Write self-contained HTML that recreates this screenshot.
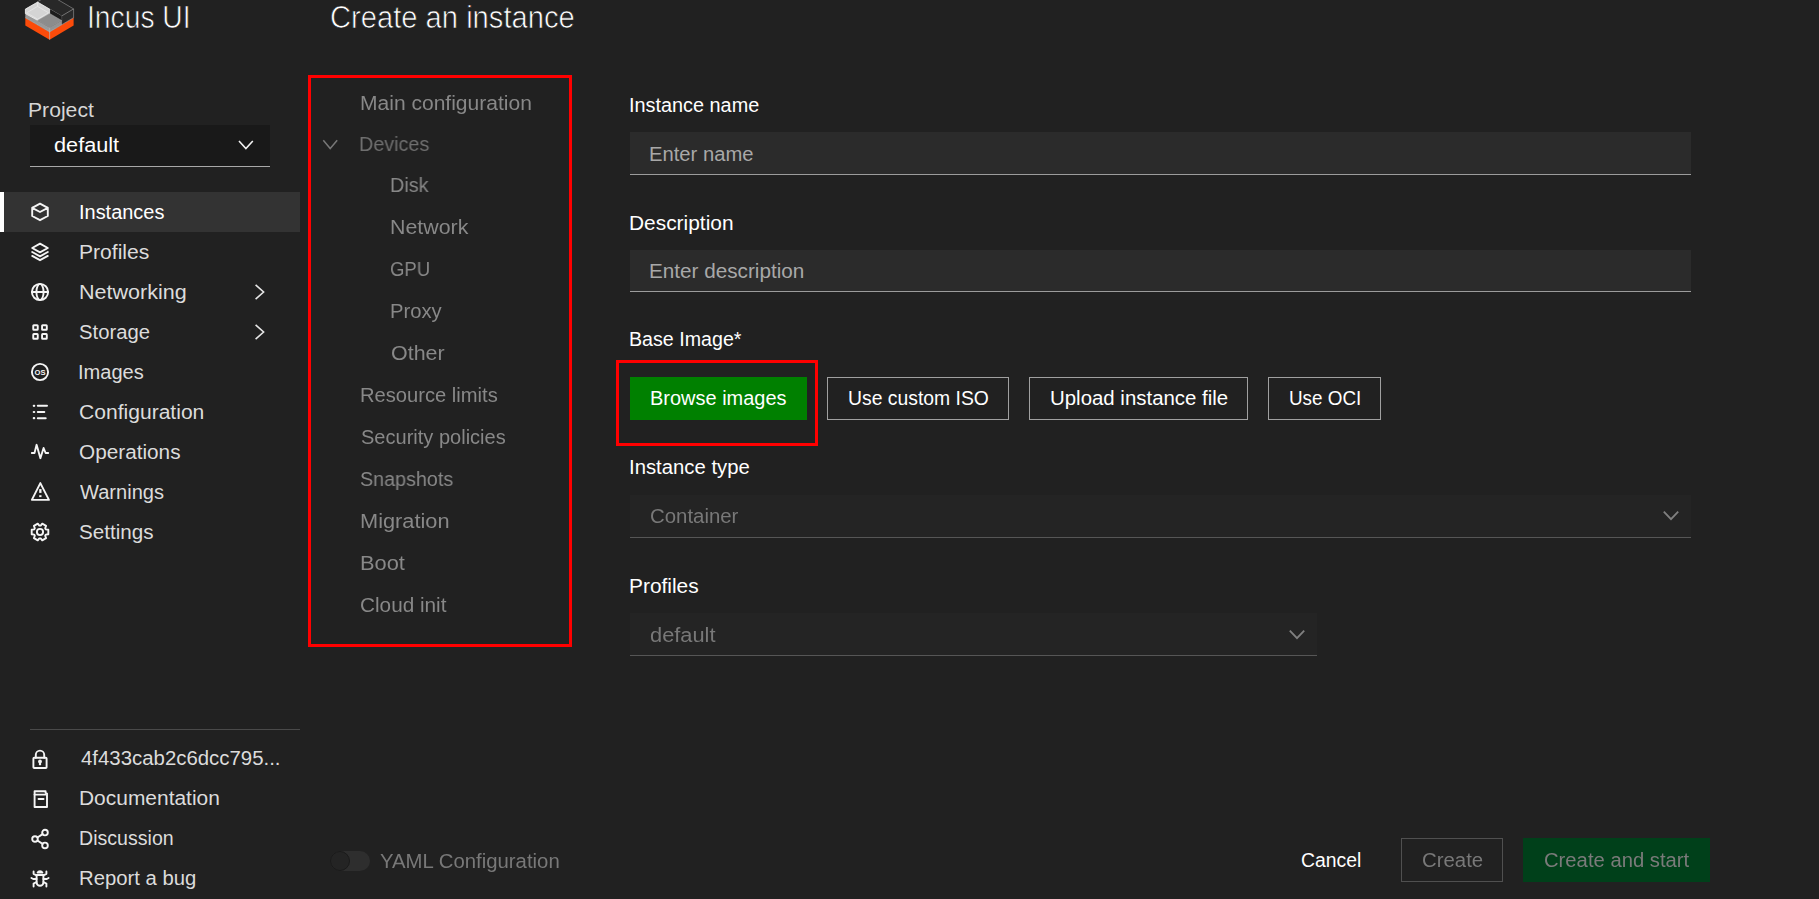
<!DOCTYPE html>
<html><head><meta charset="utf-8"><title>Create an instance</title>
<style>
html,body{margin:0;padding:0;}
body{width:1819px;height:899px;overflow:hidden;background:#212121;position:relative;font-family:"Liberation Sans", sans-serif;}
.abs{position:absolute;box-sizing:content-box;}
.t{position:absolute;white-space:nowrap;transform-origin:0 0;}
</style></head><body>
<svg class="abs" style="left:0;top:0" width="80" height="45" viewBox="0 0 80 45">
<polygon points="25.3,17.7 49.6,31.9 49.6,39.7 25.3,25.5" fill="#fb4b0a"/>
<polygon points="49.6,31.9 73.6,17.7 73.6,25.5 49.6,39.7" fill="#fb4b0a"/>
<polygon points="37.45,1.8 49.45,-5.3 73.6,8.9 61.6,16 49.45,8.9" fill="#282828"/>
<polygon points="61.6,16 73.6,8.9 73.6,17.7 61.6,24.8" fill="#2a2a2a"/>
<polyline points="37.45,1.8 49.45,-5.3 73.6,8.9 73.6,17.7" fill="none" stroke="#9a9a9a" stroke-width="0.6"/>
<polyline points="49.45,8.9 61.6,16 73.6,8.9" fill="none" stroke="#a8a8a8" stroke-width="0.6"/>
<line x1="61.6" y1="16" x2="61.6" y2="24.8" stroke="#a8a8a8" stroke-width="0.6"/>
<polygon points="49.45,8.9 61.6,16 61.6,20.5 49.45,13.4" fill="#1c1c1c"/>
<polygon points="25.3,8.9 38.2,16.4 38.2,25.2 25.3,17.7" fill="#9a9a9a"/>
<polygon points="37.6,2.1 49.6,9.1 49.6,13.9 37.6,20.3 25.4,13.6 25.4,9.1" fill="#d4d4d4" stroke="#f2f2f2" stroke-width="0.8"/>
<polygon points="37.6,6.4 48.6,12.8 37.6,19.2 26.7,12.8" fill="none" stroke="#eeeeee" stroke-width="0.6"/>
<line x1="37.6" y1="2.1" x2="37.6" y2="6.4" stroke="#f2f2f2" stroke-width="0.6"/>
<polygon points="37.45,20.5 49.45,13.4 61.6,20.5 49.6,27.6" fill="#8c8c8c" stroke="#b0b0b0" stroke-width="0.5"/>
<polygon points="37.45,20.5 49.6,27.6 49.6,31.9 37.45,24.8" fill="#9a9a9a"/>
<polygon points="49.6,27.6 61.6,20.5 61.6,24.8 49.6,31.9" fill="#939393"/>
<polyline points="25.3,17.7 49.6,31.9 73.6,17.7" fill="none" stroke="#c8c8c8" stroke-width="0.5"/>
<line x1="49.6" y1="27.6" x2="49.6" y2="39.7" stroke="#d0d0d0" stroke-width="0.6"/>
</svg>
<div class="t" style="left:86.66px;top:1.80px;font-size:31px;line-height:31px;color:#fff;transform:scaleX(0.9113);-webkit-text-stroke:0.7px #212121">Incus UI</div>
<div class="t" style="left:329.54px;top:2.30px;font-size:31px;line-height:31px;color:#fff;transform:scaleX(0.9404);-webkit-text-stroke:0.7px #212121">Create an instance</div>
<div class="t" style="left:28.31px;top:100.10px;font-size:20px;line-height:20px;color:#d6d6d6;transform:scaleX(1.0578);">Project</div>
<div class="abs" style="left:30px;top:125px;width:240px;height:41px;background:#191919;border-bottom:1px solid #a8a8a8"></div>
<div class="t" style="left:53.83px;top:135.10px;font-size:20px;line-height:20px;color:#fff;transform:scaleX(1.0845);">default</div>
<svg class="abs" style="left:236px;top:136px" width="20" height="18" viewBox="0 0 20 18"><polyline points="3,5 9.9,12.5 16.8,5" fill="none" stroke="#f2f2f2" stroke-width="1.6"/></svg>
<div class="abs" style="left:0;top:192px;width:300px;height:40px;background:#333"></div>
<div class="abs" style="left:0;top:192px;width:4px;height:40px;background:#fff"></div>
<div class="t" style="left:78.50px;top:202.10px;font-size:20px;line-height:20px;color:#fff;transform:scaleX(0.9975);">Instances</div>
<div class="t" style="left:78.61px;top:242.10px;font-size:20px;line-height:20px;color:#dcdcdc;transform:scaleX(1.0544);">Profiles</div>
<div class="t" style="left:78.58px;top:282.10px;font-size:20px;line-height:20px;color:#dcdcdc;transform:scaleX(1.0759);">Networking</div>
<div class="t" style="left:79.49px;top:322.10px;font-size:20px;line-height:20px;color:#dcdcdc;transform:scaleX(1.0128);">Storage</div>
<div class="t" style="left:78.49px;top:362.10px;font-size:20px;line-height:20px;color:#dcdcdc;transform:scaleX(1.0034);">Images</div>
<div class="t" style="left:79.25px;top:402.10px;font-size:20px;line-height:20px;color:#dcdcdc;transform:scaleX(1.0536);">Configuration</div>
<div class="t" style="left:79.47px;top:442.10px;font-size:20px;line-height:20px;color:#dcdcdc;transform:scaleX(1.0380);">Operations</div>
<div class="t" style="left:80.30px;top:482.10px;font-size:20px;line-height:20px;color:#dcdcdc;transform:scaleX(1.0032);">Warnings</div>
<div class="t" style="left:79.48px;top:522.10px;font-size:20px;line-height:20px;color:#dcdcdc;transform:scaleX(1.0301);">Settings</div>
<div class="t" style="left:80.59px;top:748.10px;font-size:20px;line-height:20px;color:#dcdcdc;transform:scaleX(1.0194);">4f433cab2c6dcc795...</div>
<div class="t" style="left:79.32px;top:788.10px;font-size:20px;line-height:20px;color:#dcdcdc;transform:scaleX(1.0471);">Documentation</div>
<div class="t" style="left:79.43px;top:828.10px;font-size:20px;line-height:20px;color:#dcdcdc;transform:scaleX(0.9790);">Discussion</div>
<div class="t" style="left:79.38px;top:868.10px;font-size:20px;line-height:20px;color:#dcdcdc;transform:scaleX(1.0150);">Report a bug</div>
<div class="abs" style="left:30px;top:729px;width:270px;height:1px;background:#4a4a4a"></div>
<svg class="abs" style="left:28px;top:200px" width="24" height="24" viewBox="0 0 24 24" fill="none" stroke="#f5f5f5" stroke-width="1.9" stroke-linejoin="round" stroke-linecap="round"><path d="M12 3.6 L19.8 7.8 V16 L12 20.2 L4.2 16 V7.8 Z M4.2 7.8 L12 12 L19.8 7.8"/></svg>
<svg class="abs" style="left:28px;top:240px" width="24" height="24" viewBox="0 0 24 24" fill="none" stroke="#f5f5f5" stroke-width="1.9" stroke-linejoin="round" stroke-linecap="round"><path d="M12 3.6 L19.8 8 L12 12.4 L4.2 8 Z"/><path d="M4.2 12 L12 16.3 L19.8 12"/><path d="M4.2 15.9 L12 20.2 L19.8 15.9"/></svg>
<svg class="abs" style="left:28px;top:280px" width="24" height="24" viewBox="0 0 24 24" fill="none" stroke="#f5f5f5" stroke-width="1.9" stroke-linejoin="round" stroke-linecap="round"><circle cx="12" cy="12" r="8.1"/><path d="M3.9 12 H20.1"/><ellipse cx="12" cy="12" rx="3.6" ry="8.1"/></svg>
<svg class="abs" style="left:28px;top:320px" width="24" height="24" viewBox="0 0 24 24" fill="none" stroke="#f5f5f5" stroke-width="1.9" stroke-linejoin="round" stroke-linecap="round"><rect x="5.25" y="5.25" width="4.5" height="4.5" rx="0.6"/><rect x="14.05" y="5.25" width="4.75" height="4.5" rx="0.6"/><rect x="5.25" y="14.05" width="4.5" height="4.75" rx="0.6"/><rect x="14.05" y="14.05" width="4.75" height="4.75" rx="0.6"/></svg>
<svg class="abs" style="left:28px;top:360px" width="24" height="24" viewBox="0 0 24 24" fill="none" stroke="#f5f5f5" stroke-width="1.9" stroke-linejoin="round" stroke-linecap="round"><circle cx="12" cy="12" r="8.1"/><text x="12" y="14.6" font-family="Liberation Sans" font-weight="bold" font-size="7.6" text-anchor="middle" fill="#f5f5f5" stroke="none">OS</text></svg>
<svg class="abs" style="left:28px;top:400px" width="24" height="24" viewBox="0 0 24 24" fill="none" stroke="#f5f5f5" stroke-width="1.9" stroke-linejoin="round" stroke-linecap="round"><path d="M5.8 5.8 H6.2 M5.8 12 H6.2 M5.8 18.2 H6.2" stroke-width="2.2"/><path d="M9.8 5.8 H19 M9.8 12 H16.3 M9.8 18.2 H17.7" stroke-width="2"/></svg>
<svg class="abs" style="left:28px;top:440px" width="24" height="24" viewBox="0 0 24 24" fill="none" stroke="#f5f5f5" stroke-width="1.9" stroke-linejoin="round" stroke-linecap="round"><path d="M3.8 13 H6.5 L8.6 4.8 L12.4 18.2 L15.6 8 L17.6 13 H20.2"/></svg>
<svg class="abs" style="left:28px;top:480px" width="24" height="24" viewBox="0 0 24 24" fill="none" stroke="#f5f5f5" stroke-width="1.9" stroke-linejoin="round" stroke-linecap="round"><path d="M12.35 3.1 L20.95 19.85 H3.85 Z" stroke-width="1.9"/><rect x="11.2" y="9.1" width="2.3" height="3.8" fill="#f5f5f5" stroke="none"/><rect x="11.2" y="15.2" width="2.3" height="1.9" fill="#f5f5f5" stroke="none"/></svg>
<svg class="abs" style="left:28px;top:520px" width="24" height="24" viewBox="0 0 24 24" fill="none" stroke="#f5f5f5" stroke-width="1.9" stroke-linejoin="round" stroke-linecap="round"><path d="M17.85 14.60 L20.31 14.23 L20.31 9.77 L17.85 9.40 L17.18 8.24 L18.08 5.92 L14.23 3.69 L12.67 5.64 L11.33 5.64 L9.77 3.69 L5.92 5.92 L6.82 8.24 L6.15 9.40 L3.69 9.77 L3.69 14.23 L6.15 14.60 L6.82 15.76 L5.92 18.08 L9.77 20.31 L11.33 18.36 L12.67 18.36 L14.23 20.31 L18.08 18.08 L17.18 15.76 Z"/><circle cx="12" cy="12" r="3.1"/></svg>
<svg class="abs" style="left:28px;top:747px" width="24" height="24" viewBox="0 0 24 24" fill="none" stroke="#f5f5f5" stroke-width="1.9" stroke-linejoin="round" stroke-linecap="round"><rect x="5.4" y="10.8" width="13.2" height="10.2" rx="0.8"/><path d="M7.8 10.8 V7.8 A4.2 4.2 0 0 1 16.2 7.8 V10.8"/><circle cx="12" cy="14.4" r="1.9" fill="#f5f5f5" stroke="none"/><path d="M12 15 V18.2" stroke-width="2.2" stroke-linecap="butt"/></svg>
<svg class="abs" style="left:28px;top:787px" width="24" height="24" viewBox="0 0 24 24" fill="none" stroke="#f5f5f5" stroke-width="1.9" stroke-linejoin="round" stroke-linecap="round"><path d="M6.6 4.2 H17.6 V6 L19 6.6 V20 H6.6 Z"/><path d="M6.6 7.6 H17.6"/><path d="M10.5 12 H15.6" stroke-width="1.8"/></svg>
<svg class="abs" style="left:28px;top:827px" width="24" height="24" viewBox="0 0 24 24" fill="none" stroke="#f5f5f5" stroke-width="1.9" stroke-linejoin="round" stroke-linecap="round"><circle cx="17" cy="5.6" r="2.8"/><circle cx="7" cy="12" r="2.8"/><circle cx="17" cy="18.4" r="2.8"/><path d="M9.4 10.5 L14.6 7.1 M9.4 13.5 L14.6 16.9"/></svg>
<svg class="abs" style="left:28px;top:867px" width="24" height="24" viewBox="0 0 24 24" fill="none" stroke="#f5f5f5" stroke-width="1.9" stroke-linejoin="round" stroke-linecap="round"><path d="M8.6 8 H15.4 V15.4 A3.4 3.4 0 0 1 8.6 15.4 Z"/><path d="M9.6 5.6 A2.6 2.4 0 0 1 14.4 5.6 Z" fill="#f5f5f5"/><path d="M5.6 4.5 V6.8 L8.6 8.4 M18.4 4.5 V6.8 L15.4 8.4 M3.4 11 L5.2 12 H8.6 M20.6 11 L18.8 12 H15.4 M5.6 19.6 V16.6 L8.6 15 M18.4 19.6 V16.6 L15.4 15"/></svg>
<svg class="abs" style="left:250px;top:281.5px" width="20" height="20" viewBox="0 0 20 20"><polyline points="5.6,2.8 13.6,10 5.6,17.2" fill="none" stroke="#e6e6e6" stroke-width="1.6"/></svg>
<svg class="abs" style="left:250px;top:321.5px" width="20" height="20" viewBox="0 0 20 20"><polyline points="5.6,2.8 13.6,10 5.6,17.2" fill="none" stroke="#e6e6e6" stroke-width="1.6"/></svg>
<div class="abs" style="left:308px;top:75px;width:258px;height:566px;border:3px solid #f00"></div>
<div class="t" style="left:359.62px;top:93.30px;font-size:20px;line-height:20px;color:#888;transform:scaleX(1.0516);;will-change:transform">Main configuration</div>
<div class="t" style="left:358.82px;top:134.00px;font-size:20px;line-height:20px;color:#6f6f6f;transform:scaleX(0.9879);;will-change:transform">Devices</div>
<div class="t" style="left:389.92px;top:174.90px;font-size:20px;line-height:20px;color:#888;transform:scaleX(0.9870);;will-change:transform">Disk</div>
<div class="t" style="left:389.79px;top:216.50px;font-size:20px;line-height:20px;color:#888;transform:scaleX(1.0688);;will-change:transform">Network</div>
<div class="t" style="left:390.48px;top:258.70px;font-size:20px;line-height:20px;color:#888;transform:scaleX(0.9243);;will-change:transform">GPU</div>
<div class="t" style="left:389.88px;top:300.70px;font-size:20px;line-height:20px;color:#888;transform:scaleX(1.0117);;will-change:transform">Proxy</div>
<div class="t" style="left:390.64px;top:342.80px;font-size:20px;line-height:20px;color:#888;transform:scaleX(1.0723);;will-change:transform">Other</div>
<div class="t" style="left:359.89px;top:384.90px;font-size:20px;line-height:20px;color:#888;transform:scaleX(1.0074);;will-change:transform">Resource limits</div>
<div class="t" style="left:360.50px;top:426.90px;font-size:20px;line-height:20px;color:#888;transform:scaleX(1.0014);;will-change:transform">Security policies</div>
<div class="t" style="left:360.41px;top:469.10px;font-size:20px;line-height:20px;color:#888;transform:scaleX(0.9859);;will-change:transform">Snapshots</div>
<div class="t" style="left:359.56px;top:511.10px;font-size:20px;line-height:20px;color:#888;transform:scaleX(1.0889);;will-change:transform">Migration</div>
<div class="t" style="left:359.55px;top:553.20px;font-size:20px;line-height:20px;color:#888;transform:scaleX(1.0913);;will-change:transform">Boot</div>
<div class="t" style="left:360.26px;top:595.30px;font-size:20px;line-height:20px;color:#888;transform:scaleX(1.0373);;will-change:transform">Cloud init</div>
<svg class="abs" style="left:320px;top:134px" width="20" height="20" viewBox="0 0 20 20"><polyline points="3.3,6.2 10.2,14.6 17.2,6.2" fill="none" stroke="#777" stroke-width="1.5"/></svg>
<div class="t" style="left:629.31px;top:95.20px;font-size:20px;line-height:20px;color:#fff;transform:scaleX(0.9925);">Instance name</div>
<div class="abs" style="left:630px;top:132px;width:1061px;height:42px;background:#2b2b2b;border-bottom:1px solid #9c9c9c"></div>
<div class="t" style="left:649.18px;top:144.20px;font-size:20px;line-height:20px;color:#a8a8a8;transform:scaleX(1.0112);">Enter name</div>
<div class="t" style="left:629.13px;top:213.10px;font-size:20px;line-height:20px;color:#fff;transform:scaleX(1.0450);">Description</div>
<div class="abs" style="left:630px;top:250px;width:1061px;height:41px;background:#2b2b2b;border-bottom:1px solid #9c9c9c"></div>
<div class="t" style="left:649.14px;top:261.40px;font-size:20px;line-height:20px;color:#a8a8a8;transform:scaleX(1.0349);">Enter description</div>
<div class="t" style="left:629.43px;top:328.90px;font-size:20px;line-height:20px;color:#fff;transform:scaleX(0.9820);">Base Image*</div>
<div class="abs" style="left:616px;top:360px;width:196px;height:80px;border:3px solid #f00"></div>
<div class="abs" style="left:630px;top:377px;width:177px;height:43px;background:#008000"></div>
<div class="t" style="left:650.10px;top:387.90px;font-size:20px;line-height:20px;color:#fff;transform:scaleX(0.9984);">Browse images</div>
<div class="abs" style="left:827px;top:377px;width:180px;height:41px;border:1px solid #a0a0a0"></div>
<div class="t" style="left:847.85px;top:387.70px;font-size:20px;line-height:20px;color:#fff;transform:scaleX(0.9676);">Use custom ISO</div>
<div class="abs" style="left:1029px;top:377px;width:217px;height:41px;border:1px solid #a0a0a0"></div>
<div class="t" style="left:1049.57px;top:387.70px;font-size:20px;line-height:20px;color:#fff;transform:scaleX(1.0207);">Upload instance file</div>
<div class="abs" style="left:1268px;top:377px;width:111px;height:41px;border:1px solid #a0a0a0"></div>
<div class="t" style="left:1288.68px;top:387.70px;font-size:20px;line-height:20px;color:#fff;transform:scaleX(0.9426);">Use OCI</div>
<div class="t" style="left:629.17px;top:457.10px;font-size:20px;line-height:20px;color:#fff;transform:scaleX(1.0151);">Instance type</div>
<div class="abs" style="left:630px;top:495px;width:1061px;height:42px;background:#242424;border-bottom:1px solid #565656"></div>
<div class="t" style="left:649.78px;top:506.00px;font-size:20px;line-height:20px;color:#787878;transform:scaleX(1.0192);;will-change:transform">Container</div>
<svg class="abs" style="left:1661px;top:506px" width="20" height="20" viewBox="0 0 20 20"><polyline points="2.8,5.6 10,13.2 17.2,5.6" fill="none" stroke="#808080" stroke-width="1.8"/></svg>
<div class="t" style="left:629.33px;top:576.20px;font-size:20px;line-height:20px;color:#fff;transform:scaleX(1.0451);">Profiles</div>
<div class="abs" style="left:630px;top:613px;width:687px;height:42px;background:#242424;border-bottom:1px solid #565656"></div>
<div class="t" style="left:649.93px;top:624.90px;font-size:20px;line-height:20px;color:#787878;transform:scaleX(1.0912);;will-change:transform">default</div>
<svg class="abs" style="left:1287px;top:625px" width="20" height="20" viewBox="0 0 20 20"><polyline points="2.8,5.6 10,13.2 17.2,5.6" fill="none" stroke="#808080" stroke-width="1.8"/></svg>
<div class="abs" style="left:330px;top:851px;width:40px;height:20px;border-radius:10px;background:#2e2e2e"></div>
<div class="abs" style="left:330px;top:851px;width:18px;height:18px;border-radius:50%;background:#242424;border:1px solid #1a1a1a"></div>
<div class="t" style="left:379.59px;top:851.20px;font-size:20px;line-height:20px;color:#787878;transform:scaleX(1.0166);;will-change:transform">YAML Configuration</div>
<div class="t" style="left:1300.63px;top:850.10px;font-size:20px;line-height:20px;color:#fff;transform:scaleX(0.9681);">Cancel</div>
<div class="abs" style="left:1401px;top:838px;width:100px;height:42px;border:1px solid #505050"></div>
<div class="t" style="left:1421.58px;top:850.10px;font-size:20px;line-height:20px;color:#787878;transform:scaleX(1.0188);;will-change:transform">Create</div>
<div class="abs" style="left:1523px;top:838px;width:187px;height:44px;background:#00401a"></div>
<div class="t" style="left:1543.99px;top:850.10px;font-size:20px;line-height:20px;color:#7a7a7a;transform:scaleX(1.0123);;will-change:transform">Create and start</div>
</body></html>
